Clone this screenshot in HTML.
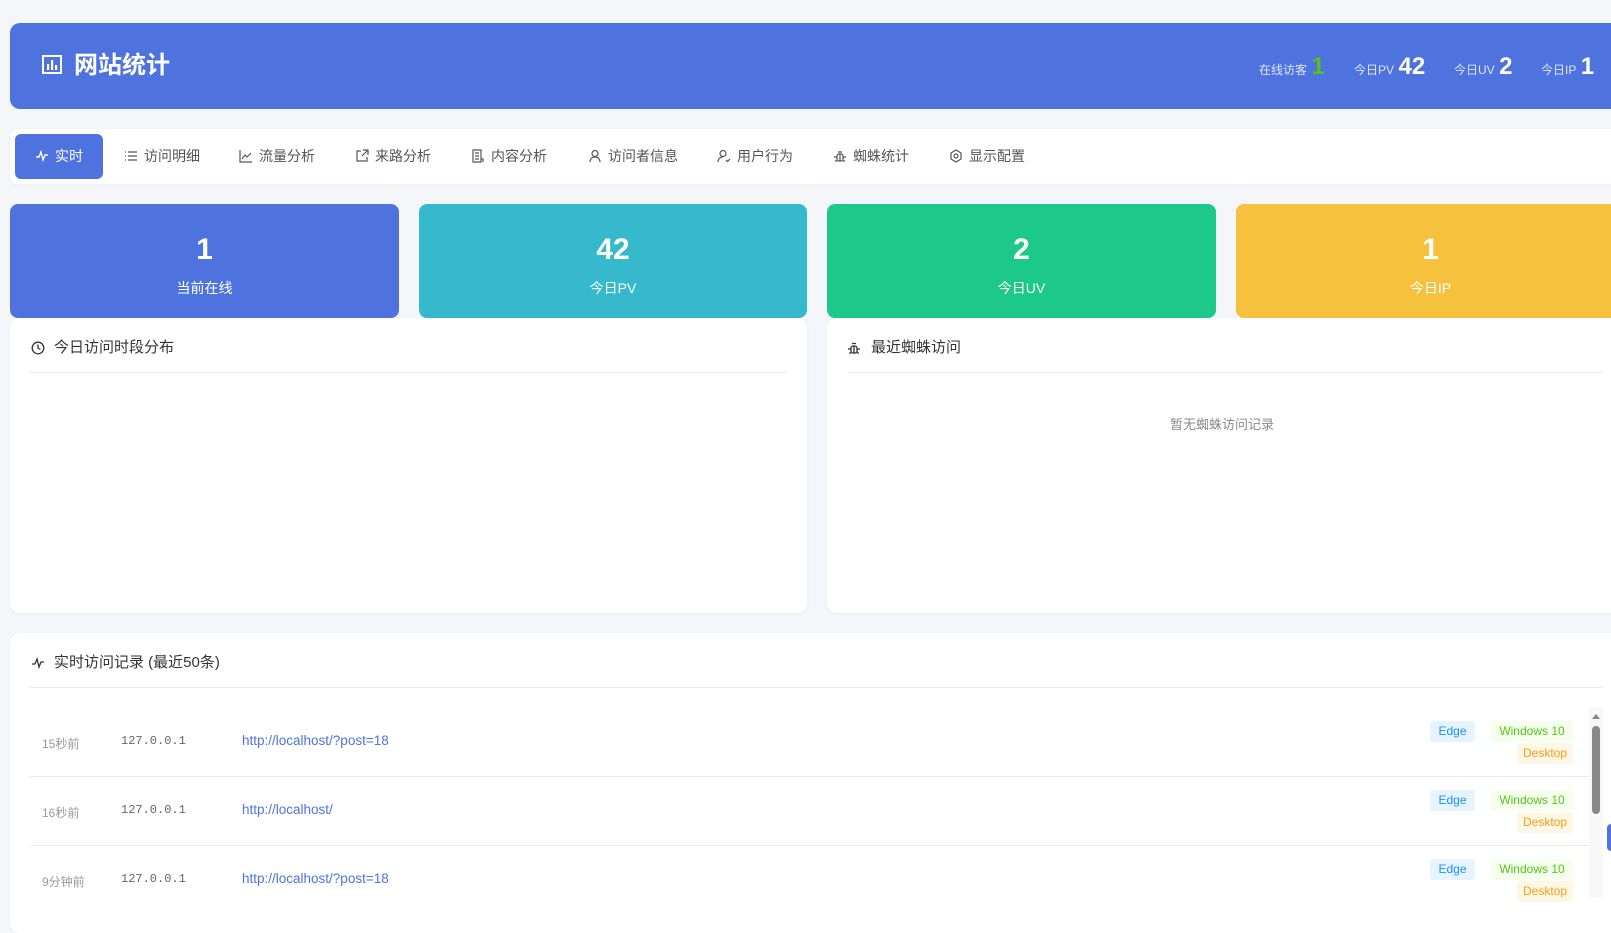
<!DOCTYPE html>
<html><head><meta charset="utf-8"><style>
*{margin:0;padding:0;box-sizing:border-box}
body{width:1611px;height:897px;overflow:hidden;background:#f5f6fa;font-family:"Liberation Sans","Noto Sans CJK SC",sans-serif;position:relative}
.abs{position:absolute}
.hdr{left:10px;top:23px;width:1640px;height:86px;background:#4e73df;border-radius:10px}
.tabs{left:10px;top:129px;width:1640px;height:55px;background:#fff;border-radius:8px;box-shadow:0 1px 4px rgba(0,0,0,.04)}
.tab{position:absolute;top:144px;font-size:14px;color:#555;line-height:24px;white-space:nowrap}
.tab svg{position:absolute;left:-20px;top:5px}
.card{top:204px;height:114px;border-radius:8px;color:#fff;text-align:center}
.card b{display:block;font-size:30px;margin-top:28px;line-height:36px}
.card span{display:block;font-size:14px;margin-top:10px}
.panel{background:#fff;border-radius:10px;box-shadow:0 1px 4px rgba(0,0,0,.04)}
.pt{position:absolute;font-size:15px;color:#333;line-height:20px}
.line{position:absolute;height:1px;background:#eaeaea}
.t{position:absolute;font-size:12px;color:#999}
.ip{position:absolute;font-size:12px;color:#666;font-family:"Liberation Mono",monospace}
.u{position:absolute;font-size:13.5px;color:#4e73df}
.bd{position:absolute;font-size:12px;height:21px;line-height:21px;text-align:center;border-radius:3px}
.e{background:#e6f4ff;color:#1890ff;width:45px}
.w{background:#f6ffed;color:#52c41a;width:82px}
.d{background:#fff7e6;color:#fa9c14;width:60px}
</style></head><body>
<div class="abs hdr"></div>
<svg class="abs" style="left:42px;top:55px" width="20" height="19" viewBox="0 0 20 19"><rect x="1" y="1" width="18" height="17" fill="none" stroke="#fff" stroke-width="2"/><rect x="5" y="9" width="2.2" height="6" fill="#fff"/><rect x="9" y="5" width="2.2" height="10" fill="#fff"/><rect x="13" y="10" width="2.2" height="5" fill="#fff"/></svg>
<div class="abs" style="left:74px;top:50px;font-size:24px;color:#fff;line-height:32px;font-weight:bold">网站统计</div>
<div class="abs" style="left:1259px;top:52px;color:#fff;white-space:nowrap;line-height:30px">
<span style="font-size:12px;color:#dfe6fb">在线访客</span> <b style="font-size:24px;color:#52c41a">1</b>
</div>
<div class="abs" style="left:1354px;top:52px;color:#fff;white-space:nowrap;line-height:30px"><span style="font-size:12px;color:#dfe6fb">今日PV</span> <b style="font-size:24px">42</b></div>
<div class="abs" style="left:1454px;top:52px;color:#fff;white-space:nowrap;line-height:30px"><span style="font-size:12px;color:#dfe6fb">今日UV</span> <b style="font-size:24px">2</b></div>
<div class="abs" style="left:1541px;top:52px;color:#fff;white-space:nowrap;line-height:30px"><span style="font-size:12px;color:#dfe6fb">今日IP</span> <b style="font-size:24px">1</b></div>

<div class="abs tabs"></div>
<div class="abs" style="left:15px;top:134px;width:88px;height:45px;background:#4e73df;border-radius:6px"></div>
<div class="tab" style="left:55px;color:#fff"><svg width="14" height="14" viewBox="0 0 14 14"><path d="M1 8h3l2-5 2 8 2-5h3" fill="none" stroke="#fff" stroke-width="1.4"/></svg>实时</div>
<div class="tab" style="left:144px"><svg width="14" height="14" viewBox="0 0 14 14"><path d="M1 3h1M1 7h1M1 11h1M4 3h9M4 7h9M4 11h9" stroke="#555" stroke-width="1.2"/></svg>访问明细</div>
<div class="tab" style="left:259px"><svg width="14" height="14" viewBox="0 0 14 14"><path d="M1 1v12h12M3 10l3-4 2 2 4-4" fill="none" stroke="#555" stroke-width="1.2"/></svg>流量分析</div>
<div class="tab" style="left:375px"><svg width="14" height="14" viewBox="0 0 14 14"><path d="M6 2H2v10h10V8M8 1h5v5M13 1L7 7" fill="none" stroke="#555" stroke-width="1.2"/></svg>来路分析</div>
<div class="tab" style="left:491px"><svg width="14" height="14" viewBox="0 0 14 14"><path d="M2 1h8v12H2zM4 4h4M4 7h4M4 10h4M10 10h2v3" fill="none" stroke="#555" stroke-width="1.2"/></svg>内容分析</div>
<div class="tab" style="left:608px"><svg width="14" height="14" viewBox="0 0 14 14"><circle cx="7" cy="4.5" r="3" fill="none" stroke="#555" stroke-width="1.2"/><path d="M2 13c0-3 2-5 5-5s5 2 5 5" fill="none" stroke="#555" stroke-width="1.2"/></svg>访问者信息</div>
<div class="tab" style="left:737px"><svg width="14" height="14" viewBox="0 0 14 14"><circle cx="6" cy="4.5" r="3" fill="none" stroke="#555" stroke-width="1.2"/><path d="M1 13c0-3 2-5 5-5M9 11l1.5 1.5L13 10" fill="none" stroke="#555" stroke-width="1.2"/></svg>用户行为</div>
<div class="tab" style="left:853px"><svg width="14" height="14" viewBox="0 0 14 14"><rect x="4" y="5" width="6" height="7" rx="2" fill="none" stroke="#555" stroke-width="1.2"/><path d="M5 3h4M1 8h3M10 8h3M2 12h2M10 12h2M7 5v7" stroke="#555" stroke-width="1.2"/></svg>蜘蛛统计</div>
<div class="tab" style="left:969px"><svg width="14" height="14" viewBox="0 0 14 14"><path d="M7 1l5 3v6l-5 3-5-3V4z" fill="none" stroke="#555" stroke-width="1.2"/><circle cx="7" cy="7" r="2" fill="none" stroke="#555" stroke-width="1.2"/></svg>显示配置</div>

<div class="abs card" style="left:10px;width:389px;background:#4e73df"><b>1</b><span>当前在线</span></div>
<div class="abs card" style="left:419px;width:388px;background:#36b9cc"><b>42</b><span>今日PV</span></div>
<div class="abs card" style="left:827px;width:389px;background:#1cc88a"><b>2</b><span>今日UV</span></div>
<div class="abs card" style="left:1236px;width:389px;background:#f6c23e"><b>1</b><span>今日IP</span></div>

<div class="abs panel" style="left:10px;top:318px;width:797px;height:295px"></div>
<div class="abs panel" style="left:827px;top:318px;width:820px;height:295px"></div>
<svg class="abs" style="left:31px;top:341px" width="14" height="14" viewBox="0 0 14 14"><circle cx="7" cy="7" r="5.8" fill="none" stroke="#333" stroke-width="1.3"/><path d="M7 3.5V7l2.5 1.5" fill="none" stroke="#333" stroke-width="1.3"/></svg>
<div class="pt" style="left:54px;top:338px">今日访问时段分布</div>
<div class="line" style="left:30px;top:372px;width:757px"></div>
<svg class="abs" style="left:847px;top:341px" width="14" height="14" viewBox="0 0 14 14"><rect x="4" y="5" width="6" height="7" rx="2" fill="none" stroke="#333" stroke-width="1.3"/><path d="M5 2.5h4M1 8h3M10 8h3M2 12h2M10 12h2M7 5v7" stroke="#333" stroke-width="1.3"/></svg>
<div class="pt" style="left:871px;top:338px">最近蜘蛛访问</div>
<div class="line" style="left:847px;top:372px;width:755px"></div>
<div class="abs" style="left:1170px;top:414px;font-size:13px;color:#888">暂无蜘蛛访问记录</div>

<div class="abs panel" style="left:10px;top:633px;width:1640px;height:300px"></div>
<svg class="abs" style="left:31px;top:656px" width="14" height="14" viewBox="0 0 14 14"><path d="M1 8h3l2-5 2 8 2-5h3" fill="none" stroke="#333" stroke-width="1.3"/></svg>
<div class="pt" style="left:54px;top:653px">实时访问记录 (最近50条)</div>
<div class="line" style="left:30px;top:687px;width:1572px"></div>

<div class="t" style="left:42px;top:735px">15秒前</div>
<div class="ip" style="left:121px;top:734px">127.0.0.1</div>
<div class="u" style="left:242px;top:733px">http://localhost/?post=18</div>
<div class="bd e" style="left:1430px;top:721px">Edge</div>
<div class="bd w" style="left:1491px;top:721px">Windows 10</div>
<div class="bd d" style="left:1517px;top:743px;width:56px">Desktop</div>
<div class="line" style="left:30px;top:776px;width:1559px"></div>

<div class="t" style="left:42px;top:804px">16秒前</div>
<div class="ip" style="left:121px;top:803px">127.0.0.1</div>
<div class="u" style="left:242px;top:802px">http://localhost/</div>
<div class="bd e" style="left:1430px;top:790px">Edge</div>
<div class="bd w" style="left:1491px;top:790px">Windows 10</div>
<div class="bd d" style="left:1517px;top:812px;width:56px">Desktop</div>
<div class="line" style="left:30px;top:845px;width:1559px"></div>

<div class="t" style="left:42px;top:873px">9分钟前</div>
<div class="ip" style="left:121px;top:872px">127.0.0.1</div>
<div class="u" style="left:242px;top:871px">http://localhost/?post=18</div>
<div class="bd e" style="left:1430px;top:859px">Edge</div>
<div class="bd w" style="left:1491px;top:859px">Windows 10</div>
<div class="bd d" style="left:1517px;top:881px;width:56px">Desktop</div>

<div class="abs" style="left:1589px;top:707px;width:14px;height:190px;background:#f8f8f8"></div>
<div class="abs" style="left:1592px;top:714px;width:0;height:0;border-left:4px solid transparent;border-right:4px solid transparent;border-bottom:5px solid #888"></div>
<div class="abs" style="left:1592px;top:726px;width:8px;height:88px;background:#888;border-radius:4px"></div>
<div class="abs" style="left:1607px;top:824px;width:10px;height:27px;background:#4e73df;border-radius:4px"></div>
</body></html>
